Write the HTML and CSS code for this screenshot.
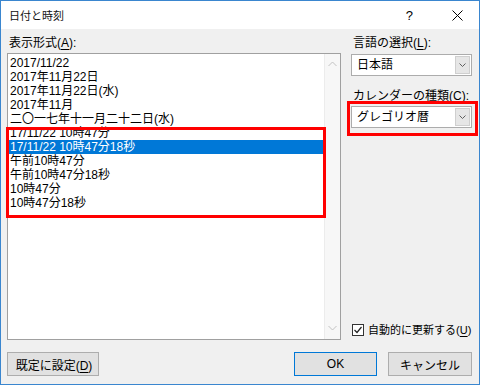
FILE: index.html
```html
<!DOCTYPE html>
<html lang="ja">
<head>
    <meta charset="UTF-8">
    <title>日付と時刻</title>
    <link rel="stylesheet" href="styles.css">
</head>
<body>
    <div class="dialog">
        <div class="titlebar">
            <span class="title">日付と時刻</span>
            <span class="help">?</span>
            <span class="close">
                <svg width="11" height="11" viewBox="0 0 11 11"><path d="M0.5 0.5 L10.5 10.5 M10.5 0.5 L0.5 10.5" stroke="#000" stroke-width="1" fill="none"/></svg>
            </span>
        </div>
        <div class="body">
            <div class="main">
                <div class="left">
                    <div class="label">表示形式(<u>A</u>):</div>
                    <div class="listbox">
                        <ul class="items">
                            <li>2017/11/22</li>
                            <li>2017年11月22日</li>
                            <li>2017年11月22日(水)</li>
                            <li>2017年11月</li>
                            <li>二〇一七年十一月二十二日(水)</li>
                            <li>17/11/22 10時47分</li>
                            <li class="selected">17/11/22 10時47分18秒</li>
                            <li>午前10時47分</li>
                            <li>午前10時47分18秒</li>
                            <li>10時47分</li>
                            <li>10時47分18秒</li>
                        </ul>
                        <div class="scrollbar">
                            <svg width="9" height="6" viewBox="0 0 9 6"><path d="M0.5 5 L4.5 1 L8.5 5" stroke="#c2c2c2" fill="none"/></svg>
                            <svg width="9" height="6" viewBox="0 0 9 6"><path d="M0.5 1 L4.5 5 L8.5 1" stroke="#c2c2c2" fill="none"/></svg>
                        </div>
                    </div>
                </div>
                <div class="right">
                    <div class="label">言語の選択(<u>L</u>):</div>
                    <div class="select">
                        <span class="value">日本語</span>
                        <span class="drop"><svg width="7" height="4" viewBox="0 0 7 4"><path d="M0.5 0.5 L3.5 3.5 L6.5 0.5" stroke="#606060" fill="none"/></svg></span>
                    </div>
                    <div class="label second">カレンダーの種類(<u>C</u>):</div>
                    <div class="select">
                        <span class="value">グレゴリオ暦</span>
                        <span class="drop"><svg width="7" height="4" viewBox="0 0 7 4"><path d="M0.5 0.5 L3.5 3.5 L6.5 0.5" stroke="#606060" fill="none"/></svg></span>
                    </div>
                    <label class="check">
                        <span class="box"><svg width="10" height="10" viewBox="0 0 10 10"><path d="M1.5 5 L4 7.5 L8.5 2" stroke="#222" stroke-width="1.2" fill="none"/></svg></span>
                        <span class="check-text">自動的に更新する(<u>U</u>)</span>
                    </label>
                </div>
            </div>
            <div class="footer">
                <button class="btn btn-default">既定に設定(<u>D</u>)</button>
                <div class="spacer"></div>
                <button class="btn btn-ok">OK</button>
                <button class="btn">キャンセル</button>
            </div>
        </div>

        <!-- annotation frames -->
        <div class="mark mark-list"></div>
        <div class="mark mark-calendar"></div>
    </div>
</body>
</html>
```

FILE: styles.css
```css
* {
    margin: 0;
    padding: 0;
    box-sizing: border-box;
}

body {
    font-family: "Liberation Sans", "Noto Sans CJK JP", sans-serif;
    font-size: 12px;
    color: #000;
    background: #f0f0f0;
    width: 480px;
    height: 385px;
    overflow: hidden;
}

u {
    text-decoration: underline;
    text-underline-offset: 2px;
}

.dialog {
    position: relative;
    width: 480px;
    height: 385px;
    border: 1px solid #3a86cf;
    background: #f0f0f0;
    display: flex;
    flex-direction: column;
}

.titlebar {
    height: 28px;
    background: #fff;
    display: flex;
    align-items: center;
    padding-left: 8px;
}

.title {
    flex: 1;
    font-size: 11px;
    color: #111;
}

.help {
    font-size: 13px;
    margin-right: 39px;
}

.close {
    display: flex;
    margin-right: 16px;
}

.body {
    flex: 1;
    display: flex;
    flex-direction: column;
    padding: 7px 7px 8px 6px;
}

.main {
    height: 304px;
    display: flex;
    gap: 10px;
}

.label {
    line-height: 14px;
    padding-left: 2px;
    height: 14px;
    white-space: nowrap;
}

.left {
    width: 334px;
    display: flex;
    flex-direction: column;
}

.left .label {
    margin-bottom: 3px;
}

.listbox {
    flex: 1;
    border: 1px solid #a0a0a0;
    background: #fff;
    display: flex;
}

.items {
    flex: 1;
    list-style: none;
    padding-top: 2px;
}

.items li {
    height: 14px;
    line-height: 14px;
    padding-left: 2px;
    white-space: nowrap;
}

.items li.selected {
    background: #0078d7;
    color: #fff;
}

.scrollbar {
    width: 16px;
    background: #f7f7f7;
    border-left: 1px solid #ececec;
    display: flex;
    flex-direction: column;
    justify-content: space-between;
    align-items: center;
    padding: 7px 0 8px;
}

.right {
    width: 121px;
    display: flex;
    flex-direction: column;
}

.right .label {
    margin-bottom: 4px;
}

.right .label.second {
    margin-top: 13px;
    margin-bottom: 3px;
}

.select {
    height: 22px;
    border: 1px solid #acacac;
    background: #fff;
    display: flex;
    align-items: stretch;
    padding: 1px;
}

.select .value {
    flex: 1;
    line-height: 18px;
    padding-left: 4px;
}

.select .drop {
    width: 15px;
    background: #e6e6e6;
    border: 1px solid #cfcfcf;
    display: flex;
    align-items: center;
    justify-content: center;
}

.check {
    margin-top: auto;
    margin-bottom: 3px;
    display: flex;
    align-items: center;
    gap: 4px;
    line-height: 14px;
    padding-left: 1px;
}

.check .box {
    flex: none;
    width: 12px;
    height: 12px;
    border: 1px solid #333;
    background: #fff;
    display: flex;
    align-items: center;
    justify-content: center;
}

.check-text {
    font-size: 11px;
    white-space: nowrap;
}

.footer {
    margin-top: 12px;
    display: flex;
    gap: 11px;
}

.spacer {
    flex: 1;
}

.btn {
    height: 24px;
    width: 84px;
    font-family: inherit;
    font-size: 12px;
    background: #e1e1e1;
    border: 1px solid #adadad;
    color: #000;
}

.btn-default {
    width: 92px;
    padding-left: 2px;
}

.btn-ok {
    width: 83px;
    border-color: #0078d7;
}

.mark {
    position: absolute;
    border: 3px solid #ff0000;
}

.mark-list {
    left: 5px;
    top: 126px;
    width: 320px;
    height: 91px;
}

.mark-calendar {
    left: 346px;
    top: 100px;
    width: 131px;
    height: 35px;
}
```
